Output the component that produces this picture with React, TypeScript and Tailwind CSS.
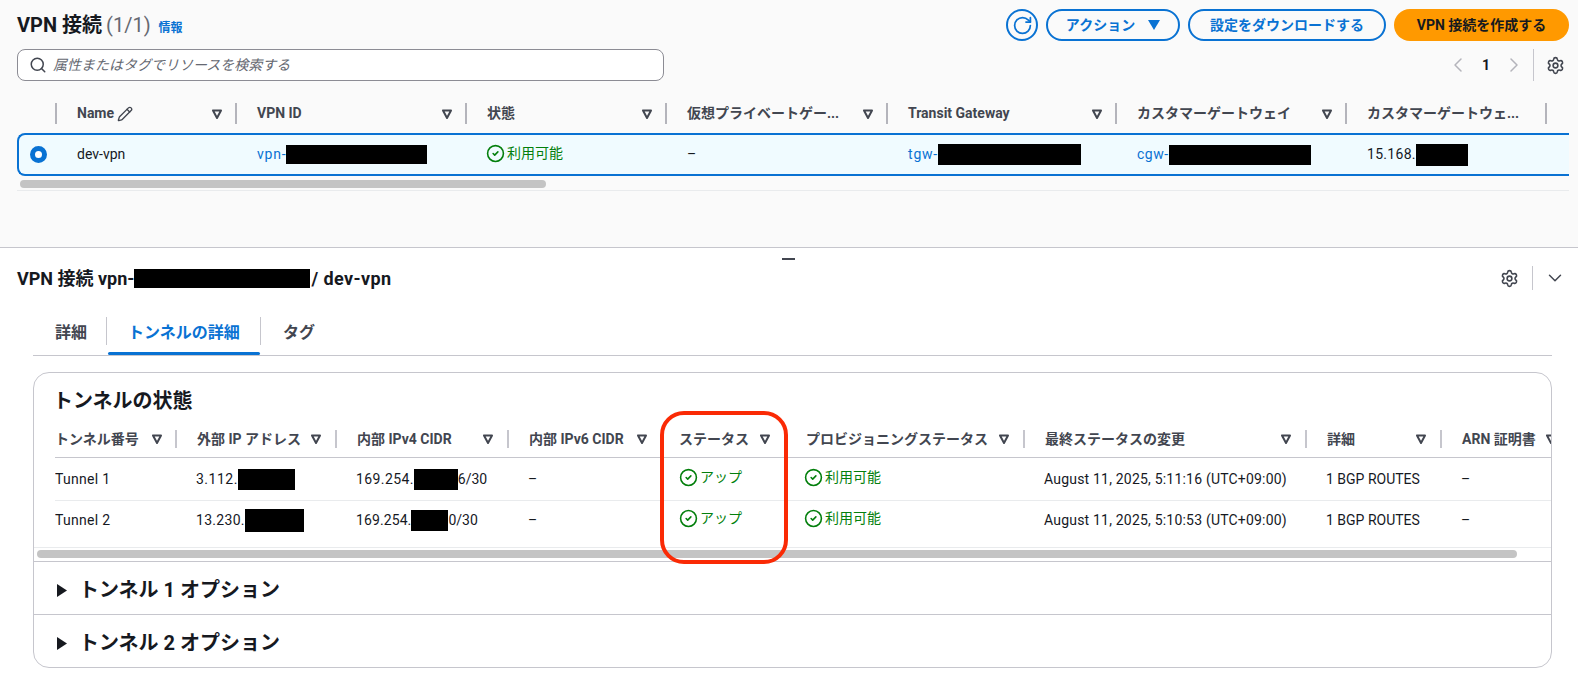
import React from 'react';
import { ChevronDown, ChevronLeft, ChevronRight, CircleCheck, Pencil, RotateCw, Search, Settings } from 'lucide-react';

const FilterIcon = () => (
  <svg className="w-[12px] h-[12px] shrink-0" viewBox="0 0 12 12" fill="none" stroke="#424650" strokeWidth={2}>
    <path d="M2 2.5h8L6 10z" strokeLinejoin="round" />
  </svg>
);

const Redact = ({ w, h }: { w: number; h: number }) => (
  <span className="inline-block bg-black align-middle shrink-0" style={{ width: w, height: h }} />
);

const Status = ({ label }: { label: string }) => (
  <span className="flex items-center gap-[2px] text-[#037f0c] text-[14px] ml-[-1px]">
    <CircleCheck className="w-[19px] h-[19px] mt-[-3px]" strokeWidth={2} />
    <span className="mt-[-3px]">{label}</span>
  </span>
);

const topColumns = [
  { w: 180, label: 'Name', pencil: true, filter: true },
  { w: 230, label: 'VPN ID', filter: true },
  { w: 200, label: '状態', filter: true },
  { w: 221, label: '仮想プライベートゲー...', filter: true },
  { w: 229, label: 'Transit Gateway', filter: true },
  { w: 230, label: 'カスタマーゲートウェイ', filter: true },
  { w: 200, label: 'カスタマーゲートウェ...', filter: false },
  { w: 100, label: '', filter: false },
];

const tunnelColumns = [
  { w: 120, label: 'トンネル番号' },
  { w: 160, label: '外部 IP アドレス' },
  { w: 172, label: '内部 IPv4 CIDR' },
  { w: 154, label: '内部 IPv6 CIDR' },
  { w: 123, label: 'ステータス' },
  { w: 239, label: 'プロビジョニングステータス' },
  { w: 282, label: '最終ステータスの変更' },
  { w: 135, label: '詳細' },
  { w: 130, label: 'ARN 証明書' },
];

const RowCell = ({ w, first, tight, children }: { w: number; first?: boolean; tight?: boolean; children?: React.ReactNode }) => (
  <div className={`shrink-0 flex items-center whitespace-nowrap ${first ? '' : tight ? 'pl-[19px]' : 'pl-[21px]'}`} style={{ width: w }}>
    {children}
  </div>
);

const TunnelRow = ({ cells, border }: { cells: React.ReactNode[]; border: string }) => (
  <div className={`flex text-[14px] text-[#16191f] ${border}`}>
    {cells.map((c, i) => (
      <RowCell key={i} w={tunnelColumns[i].w} first={i === 0} tight={i === 4}>{c}</RowCell>
    ))}
  </div>
);

const OptionRow = ({ label }: { label: string }) => (
  <div className="h-[53px] border-t border-[#c6c6cd] flex items-center pl-[23px] gap-[12px] pt-[4px] text-[20px] font-bold">
    <svg className="w-[10px] h-[13px]" viewBox="0 0 10 13" fill="#16191f"><path d="M0 0l10 6.5L0 13z" /></svg>
    {label}
  </div>
);

export default function App() {
  return (
    <div className="w-[1578px] h-[679px] overflow-hidden bg-white text-[#16191f] font-[Roboto,'Noto_Sans_CJK_JP',sans-serif] relative">
      {/* upper split panel */}
      <div className="h-[248px] bg-[#fafafa] border-b border-[#c6c6cd] pl-[17px]">
        <div className="flex items-center justify-between h-[41px] pt-[9px] pr-[9px]">
          <div className="flex items-baseline">
            <span className="text-[20px] font-bold leading-[34px]">VPN 接続</span>
            <span className="text-[20px] text-[#656871] ml-[4px]">(1/1)</span>
            <span className="text-[12px] text-[#0972d3] font-bold ml-[8px]">情報</span>
          </div>
          <div className="flex items-center gap-[8px] text-[14px] font-bold text-[#0972d3]">
            <div className="w-[32px] h-[32px] rounded-full border-2 border-[#0972d3] flex items-center justify-center">
              <RotateCw className="w-[21px] h-[21px]" strokeWidth={2} />
            </div>
            <div className="w-[134px] h-[32px] rounded-full border-2 border-[#0972d3] flex items-center justify-center gap-[13px]">
              アクション
              <svg className="w-[12px] h-[10px]" viewBox="0 0 12 10" fill="#0972d3"><path d="M0 0h12L6 10z" /></svg>
            </div>
            <div className="w-[198px] h-[32px] rounded-full border-2 border-[#0972d3] flex items-center justify-center">
              設定をダウンロードする
            </div>
            <div className="w-[175px] h-[32px] rounded-full bg-[#ff9900] text-[#16191f] flex items-center justify-center">
              VPN 接続を作成する
            </div>
          </div>
        </div>

        <div className="flex items-center justify-between mt-[8px] h-[32px] pr-[13px]">
          <div className="w-[647px] h-[32px] rounded-[8px] border border-[#8c8c94] bg-white flex items-center pl-[11px] gap-[6px]">
            <Search className="w-[18px] h-[18px] text-[#424650]" strokeWidth={2} />
            <span className="text-[14px] italic text-[#656871]">属性またはタグでリソースを検索する</span>
          </div>
          <div className="flex items-center text-[#16191f]">
            <ChevronLeft className="w-[24px] h-[24px] text-[#b4b4bb]" strokeWidth={1.5} />
            <span className="text-[14px] font-bold mx-[12px]">1</span>
            <ChevronRight className="w-[24px] h-[24px] text-[#b4b4bb]" strokeWidth={1.5} />
            <span className="w-px h-[32px] bg-[#c6c6cd] ml-[7px] mr-[12px]" />
            <Settings className="w-[19px] h-[19px] text-[#424650]" strokeWidth={2} />
          </div>
        </div>

        <div className="mt-[16px] mr-[9px] overflow-hidden">
          <div className="flex h-[36px] items-start text-[14px] font-bold text-[#424650]">
            <div className="w-[38px] shrink-0" />
            {topColumns.map((c, i) => (
              <div key={i} className="shrink-0 h-[21px] mt-[6px] flex items-center pl-[20px] pr-[12px] justify-between whitespace-nowrap border-l-2 border-[#b4b4bb]" style={{ width: c.w }}>
                <span className="flex items-center gap-[3px]">
                  {c.label}
                  {c.pencil && <Pencil className="w-[16px] h-[16px]" strokeWidth={2} />}
                </span>
                {c.filter && <FilterIcon />}
              </div>
            ))}
          </div>
          <div className="h-[43px] border-2 border-[#0972d3] rounded-l-[8px] border-r-0 bg-[#f0fbff] flex text-[14px]">
            <div className="w-[37px] shrink-0 flex items-center pl-[11px]">
              <span className="w-[17px] h-[17px] rounded-full border-[5px] border-[#0972d3] bg-white" />
            </div>
            <RowCell w={180}>dev-vpn</RowCell>
            <RowCell w={230}><span className="text-[#0972d3] tracking-[0.8px]">vpn-</span><Redact w={141} h={19} /></RowCell>
            <RowCell w={200}><Status label="利用可能" /></RowCell>
            <RowCell w={221}>–</RowCell>
            <RowCell w={229}><span className="text-[#0972d3] tracking-[0.8px]">tgw-</span><Redact w={143} h={21} /></RowCell>
            <RowCell w={230}><span className="text-[#0972d3] tracking-[0.5px]">cgw-</span><Redact w={142} h={20} /></RowCell>
            <RowCell w={200}><span className="tracking-[0.3px]">15.168.</span><Redact w={52} h={22} /></RowCell>
          </div>
          <div className="h-[15px] border-b border-[#e9ebed] pl-[3px] pt-[4px]">
            <div className="w-[526px] h-[8px] rounded-full bg-[#c4c4c4]" />
          </div>
        </div>
      </div>

      {/* lower split panel */}
      <div className="flex justify-center h-0">
        <span className="w-[13px] h-[2px] bg-[#424650] mt-[10px] ml-[-2px]" />
      </div>
      <div className="flex items-center justify-between h-[24px] mt-[18px] pl-[17px] pr-[12px]">
        <div className="flex items-center text-[18px] font-bold whitespace-nowrap">
          VPN 接続 vpn-<Redact w={176} h={19} />
          <span className="tracking-[0.4px] ml-[1px]">/ dev-vpn</span>
        </div>
        <div className="flex items-center">
          <Settings className="w-[19px] h-[19px] text-[#424650]" strokeWidth={2} />
          <span className="w-px h-[24px] bg-[#c6c6cd] ml-[13px] mr-[11px]" />
          <ChevronDown className="w-[22px] h-[22px] text-[#424650]" strokeWidth={1.6} />
        </div>
      </div>

      <div className="mt-[27px] ml-[33px] mr-[26px] h-[39px] border-b border-[#c6c6cd] flex text-[16px] font-bold text-[#424650]">
        <div className="w-[74px] h-[28px] pl-[22px] pt-[3px] flex items-center border-r border-[#c6c6cd]">詳細</div>
        <div className="w-[154px] h-[38px] text-[#0972d3] relative">
          <div className="h-[28px] pl-[21px] pt-[3px] flex items-center border-r border-[#c6c6cd]">トンネルの詳細</div>
          <div className="absolute left-[1px] right-[1px] bottom-[0px] h-[3px] rounded-full bg-[#0972d3]" />
        </div>
        <div className="h-[28px] pl-[22px] pt-[3px] flex items-center">タグ</div>
      </div>

      <div className="mt-[16px] ml-[33px] mr-[26px] h-[296px] rounded-[16px] border border-[#c6c6cd] overflow-hidden">
        <div className="pl-[19px] h-[54px] flex items-center text-[20px] font-bold mt-[1px]">トンネルの状態</div>
        <div className="flex h-[22px] mb-[7px] pl-[21px] items-center text-[14px] font-bold text-[#424650] whitespace-nowrap">
          {tunnelColumns.map((c, i) => (
            <div key={i} className={`shrink-0 h-[18px] flex items-center justify-between ${i === 0 ? 'pr-[12px]' : i === 4 ? 'pr-[13px] pl-[16px] border-l-2 border-[#c6c6cd]' : 'pr-[13px] pl-[20px] border-l-2 border-[#c6c6cd]'}`} style={{ width: c.w }}>
              {c.label}
              <FilterIcon />
            </div>
          ))}
        </div>
        <div className="ml-[21px] overflow-hidden">
          <TunnelRow
            border="h-[43px] border-t border-[#c6c6cd]"
            cells={[
              <span className="tracking-[0.3px]">Tunnel 1</span>,
              <><span className="tracking-[0.5px]">3.112.</span><Redact w={57} h={21} /></>,
              <><span className="tracking-[0.4px]">169.254.</span><Redact w={44} h={21} />6/30</>,
              '–',
              <Status label="アップ" />,
              <Status label="利用可能" />,
              <span className="tracking-[0.2px]">August 11, 2025, 5:11:16 (UTC+09:00)</span>,
              '1 BGP ROUTES',
              '–',
            ]}
          />
          <TunnelRow
            border="h-[41px] pb-[2px] border-t border-[#e9ebed]"
            cells={[
              <span className="tracking-[0.3px]">Tunnel 2</span>,
              <><span className="tracking-[0.3px]">13.230.</span><Redact w={59} h={23} /></>,
              <><span className="tracking-[0.1px]">169.254.</span><Redact w={37} h={21} />0/30</>,
              '–',
              <Status label="アップ" />,
              <Status label="利用可能" />,
              <span className="tracking-[0.2px]">August 11, 2025, 5:10:53 (UTC+09:00)</span>,
              '1 BGP ROUTES',
              '–',
            ]}
          />
        </div>
        <div className="h-[14px] border-t border-[#e9ebed] mt-[6px] pt-[2px] pl-[3px]">
          <div className="w-[1480px] h-[8px] rounded-full bg-[#c4c4c4]" />
        </div>
        <OptionRow label="トンネル 1 オプション" />
        <OptionRow label="トンネル 2 オプション" />
      </div>

      {/* red annotation around the status column */}
      <div className="absolute left-[660px] top-[411px] w-[128px] h-[153px] rounded-[24px] border-[4px] border-[#fa2a05]" />
    </div>
  );
}
